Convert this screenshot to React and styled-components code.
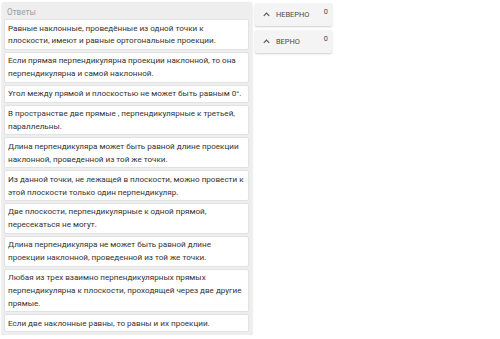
import React from "react";
import styled, { createGlobalStyle } from "styled-components";

const Global = createGlobalStyle`
  html, body { margin: 0; padding: 0; background: #ffffff; }
  body { font-family: Roboto, "Noto Sans", sans-serif; }
`;

const Page = styled.div`
  display: flex;
  align-items: flex-start;
  gap: 3px;
  padding: 2px 0 0 2px;
`;

const Panel = styled.div`
  width: 250px;
  box-sizing: border-box;
  background: #eeeeee;
  border-radius: 2px;
  box-shadow: 0 1px 2px rgba(0, 0, 0, 0.22);
  padding: 2px 3px 3px 2px;
`;

const Title = styled.div`
  font-size: 8.2px;
  line-height: 14px;
  color: #a0a0a0;
  padding: 1px 0 0 3px;
  height: 14px;
`;

const List = styled.div`
  display: flex;
  flex-direction: column;
  gap: 2px;
`;

const Card = styled.div`
  background: #ffffff;
  border: 1px solid #e2e2e2;
  border-radius: 2px;
  padding: 1.5px 4px 1.5px 3px;
  font-size: 8.1px;
  line-height: 12.9px;
  color: #333333;
`;

const Side = styled.div`
  display: flex;
  flex-direction: column;
  gap: 4px;
  padding-top: 1px;
`;

const Bin = styled.div`
  width: 77px;
  height: 23px;
  box-sizing: border-box;
  display: flex;
  align-items: center;
  background: #f4f4f4;
  border-radius: 2px;
  box-shadow: 0 1px 2px rgba(0, 0, 0, 0.2);
  padding: 0 4px 0 7px;
  color: #555555;
`;

const Chevron = styled.svg`
  width: 9px;
  height: 9px;
  flex: none;
  margin-right: 5px;
`;

const Label = styled.span`
  font-size: 7.4px;
  flex: 1;
  color: #4a4a4a;
`;

const Count = styled.span`
  font-size: 7.4px;
  color: #4a4a4a;
  margin-top: -6px;
`;

const answers = [
  "Равные наклонные, проведённые из одной точки к плоскости, имеют и равные ортогональные проекции.",
  "Если прямая перпендикулярна проекции наклонной, то она перпендикулярна и самой наклонной.",
  "Угол между прямой и плоскостью не может быть равным 0°.",
  "В пространстве две прямые , перпендикулярные к третьей, параллельны.",
  "Длина перпендикуляра может быть равной длине проекции наклонной, проведенной из той же точки.",
  "Из данной точки, не лежащей в плоскости, можно провести к этой плоскости только один перпендикуляр.",
  "Две плоскости, перпендикулярные к одной прямой, пересекаться не могут.",
  "Длина перпендикуляра не может быть равной длине проекции наклонной, проведенной из той же точки.",
  "Любая из трех взаимно перпендикулярных прямых перпендикулярна к плоскости, проходящей через две другие прямые.",
  "Если две наклонные равны, то равны и их проекции.",
];

const bins = [
  { label: "НЕВЕРНО", count: 0 },
  { label: "ВЕРНО", count: 0 },
];

export default function App() {
  return (
    <>
      <Global />
      <Page>
        <Panel>
          <Title>Ответы</Title>
          <List>
            {answers.map((a, i) => (
              <Card key={i}>{a}</Card>
            ))}
          </List>
        </Panel>
        <Side>
          {bins.map((b) => (
            <Bin key={b.label}>
              <Chevron viewBox="0 0 10 10">
                <path d="M2 6.5 L5 3.5 L8 6.5" fill="none" stroke="#555" strokeWidth="1.3" />
              </Chevron>
              <Label>{b.label}</Label>
              <Count>{b.count}</Count>
            </Bin>
          ))}
        </Side>
      </Page>
    </>
  );
}
